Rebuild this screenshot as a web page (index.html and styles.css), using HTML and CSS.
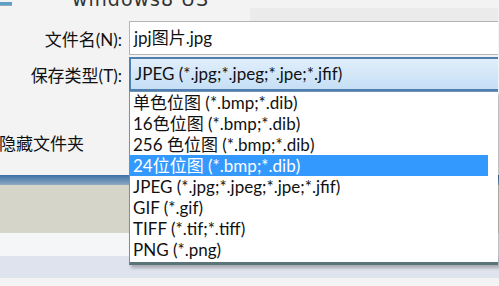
FILE: index.html
```html
<!DOCTYPE html>
<html lang="zh">
<head>
  <meta charset="UTF-8" />
  <title>保存类型</title>
  <link rel="stylesheet" href="styles.css">
</head>
<body>
  <div class="dialog">
    <div class="top">
      <div class="crumb">
        <svg class="crumb-icon" width="14" height="8" viewBox="0 0 14 8">
          <rect x="0" y="2" width="12" height="3" fill="#5aa0c8"/>
          <rect x="0" y="5" width="12" height="1" fill="#9ab"/>
        </svg>
        <span class="crumb-text">windows8 US</span>
      </div>
      <div class="addr"></div>
    </div>

    <div class="row">
      <label class="label">文件名(N):</label>
      <div class="field input">jpj图片.jpg</div>
    </div>

    <div class="row">
      <label class="label">保存类型(T):</label>
      <div class="field select">JPEG (*.jpg;*.jpeg;*.jpe;*.jfif)</div>
    </div>

    <div class="lower">
      <div class="pane">
        <span class="hide-folders">隐藏文件夹</span>
      </div>
      <div class="bar"></div>
      <div class="beige"></div>
      <div class="pale"></div>
      <div class="lav"></div>
    </div>

    <ul class="dropdown">
      <li>单色位图 (*.bmp;*.dib)</li>
      <li>16色位图 (*.bmp;*.dib)</li>
      <li>256 色位图 (*.bmp;*.dib)</li>
      <li class="selected">24位位图 (*.bmp;*.dib)</li>
      <li>JPEG (*.jpg;*.jpeg;*.jpe;*.jfif)</li>
      <li>GIF (*.gif)</li>
      <li>TIFF (*.tif;*.tiff)</li>
      <li>PNG (*.png)</li>
    </ul>
  </div>
</body>
</html>
```

FILE: styles.css
```css
* {
  box-sizing: border-box;
  margin: 0;
  padding: 0;
}

body {
  width: 499px;
  height: 286px;
  overflow: hidden;
  background: #fff;
  font-family: Lato, "Noto Sans CJK SC", sans-serif;
  font-size: 17px;
  color: #111;
}

.dialog {
  position: relative;
  width: 499px;
  height: 286px;
  background: #f3f3f3;
}

/* top strip, cut off by the screenshot */
.top {
  display: flex;
  height: 21px;
}

.crumb {
  position: relative;
  width: 250px;
  height: 21px;
  overflow: hidden;
}

.crumb-icon {
  position: absolute;
  left: 0;
  top: 0;
}

.crumb-text {
  position: absolute;
  left: 72px;
  top: -12px;
  font-family: "DejaVu Sans", sans-serif;
  font-size: 19px;
  line-height: 22px;
  color: #333;
  letter-spacing: 1px;
}

.addr {
  width: 248px;
  height: 16px;
  margin-top: 8px;
  background: #ebebeb;
  border-bottom: 2px solid #c4c4c4;
}

.row {
  display: flex;
  align-items: center;
  height: 34px;
  margin-bottom: 2px;
}

.label {
  width: 129px;
  padding-right: 7px;
  text-align: right;
}

.field {
  width: 369px;
  height: 34px;
  line-height: 32px;
  padding-left: 4px;
  white-space: nowrap;
}

.input {
  background: #fff;
  border: 1px solid #b4b4b4;
  border-right: none;
}

.select {
  background: linear-gradient(#e0eefb, #c6dff6);
  border: 2px solid #4f7fae;
  border-right: none;
  line-height: 30px;
}

.lower {
  display: flex;
  flex-direction: column;
  margin-top: -2px;
}

.pane {
  height: 84px;
  display: flex;
  align-items: center;
  padding-top: 18px;
}

.hide-folders {
  margin-left: -1px;
}

.bar {
  height: 10px;
  background: linear-gradient(#3f70a8, #8ca9c0);
}

.beige {
  height: 48px;
  background: #d6d5c9;
}

.pale {
  height: 23px;
  background: #f4f6f8;
}

.lav {
  height: 22px;
  background: #dfe3ee;
}

/* open list of the save-type select */
.dropdown {
  position: absolute;
  left: 129px;
  top: 91px;
  width: 369px;
  list-style: none;
  background: #fff;
  border: 1px solid #6f93b6;
  border-right: none;
  border-bottom: 3px solid #5a7478;
  box-shadow: 2px 3px 3px rgba(0, 0, 0, 0.25);
  padding-bottom: 2px;
}

.dropdown li {
  height: 21px;
  line-height: 21px;
  padding-left: 3px;
  white-space: nowrap;
}

.dropdown li.selected {
  background: #3399ff;
  color: #fff;
  margin-right: 10px;
}
```
